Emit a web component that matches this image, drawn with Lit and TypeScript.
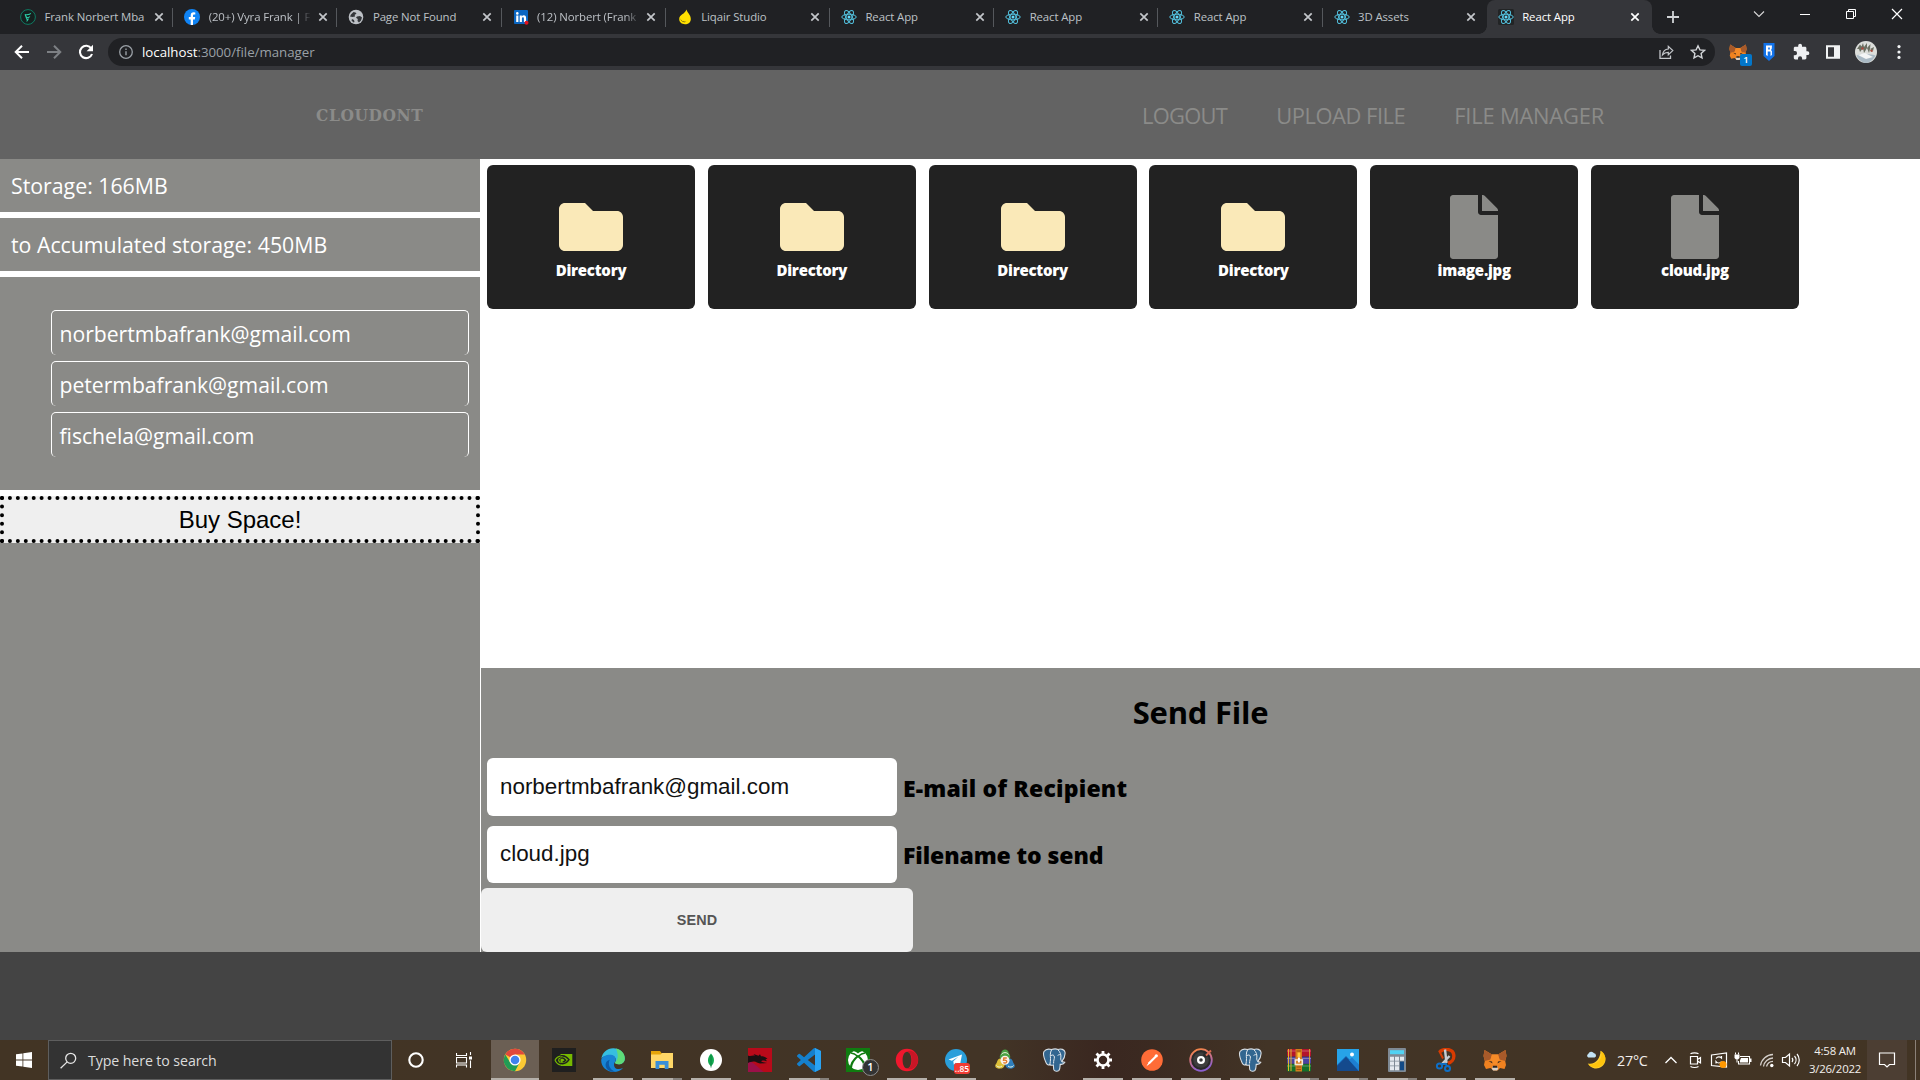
import { LitElement, html, svg, css, nothing } from "lit";
import { customElement } from "lit/decorators.js";
import { classMap } from "lit/directives/class-map.js";

const reactLogo = svg`
  <g fill="none" stroke="#53c1de" stroke-width="1">
    <ellipse cx="8" cy="8" rx="7.2" ry="2.8"/>
    <ellipse cx="8" cy="8" rx="7.2" ry="2.8" transform="rotate(60 8 8)"/>
    <ellipse cx="8" cy="8" rx="7.2" ry="2.8" transform="rotate(120 8 8)"/>
  </g><circle cx="8" cy="8" r="1.5" fill="#61dafb"/>`;

const favicons: Record<string, unknown> = {
  frank: svg`<circle cx="8" cy="8" r="7.4" fill="#15201f" stroke="#0f7a62"/>
    <path d="M5 5.600c2-.2 4.500-.6 6.300-1.800-.5 1.900-2 2.400-4.300 2.500zM6 8.200c1.500-.2 3-.5 4.300-1.300-.4 1.700-1.500 2-3 2.200zM6.300 10c.9 0 1.700-.2 2.500-.7-.2 1.700-.8 2.700-2.300 3.600.4-1.200.4-2-.2-2.900z" fill="#2bd0a8"/>
    <path d="M5.200 5.200 6.800 9.800" stroke="#2bd0a8" stroke-width="1.300"/>`,
  facebook: svg`<circle cx="8" cy="8" r="8" fill="#1084f5"/>
    <path d="M6.700 16v-5.600H4.800V8h1.900V6.500c0-2.100 1.100-3.200 3-3.200l1.600.1v2h-1c-1 0-1.300.5-1.300 1.300V8h2.200l-.4 2.400H9V16z" fill="#fff"/>`,
  globe: svg`<circle cx="8" cy="8" r="7.300" fill="#bdc1c6"/>
    <path d="M3 5.500 5.500 3l2 .5 1 1.300-1.800 1L7 7.500 4.500 8 2 7.500zM9 7.500l3-.5 2 1.500-1 3-2 2-1.500-1.500.3-2L8 8.800zM4 10l2 1 .5 2-1 .5-2-2z" fill="#33363a"/>`,
  linkedin: svg`<rect x="1" y="1" width="14" height="14" rx="1" fill="#0a66c2"/>
    <circle cx="4.300" cy="4.400" r="1.300" fill="#fff"/>
    <path d="M3.200 6.500h2.200V13H3.200zM6.700 6.500h2.100v.9c.4-.7 1.100-1.100 2-1.100 1.700 0 2.300 1 2.300 2.900V13h-2.200V9.700c0-.9-.2-1.500-.9-1.500-.8 0-1.100.6-1.100 1.500V13H6.700z" fill="#fff"/>
    <circle cx="13.500" cy="13.800" r="2" fill="#e0121f"/>`,
  drop: svg`<path d="M9.500.6c.6 3 4.300 5.400 4.300 9.300 0 3.300-2.600 5.300-5.800 5.300s-5.800-1.900-5.800-5.200C2.200 5.800 8 5.200 9.500.6z" fill="#ffe000"/>
    <path d="M3.400 9.200c.6 2.700 3 3.800 6 3.500-1.500.9-5.400.9-6-3.500z" fill="#3a3410"/>`,
  react: reactLogo,
  reactActive: svg`<rect width="16" height="16" rx="1.500" fill="#222425"/>${reactLogo}`,
};

const tabs = [
  { icon: "frank", title: "Frank Norbert Mba" },
  { icon: "facebook", title: "(20+) Vyra Frank | F", fade: true },
  { icon: "globe", title: "Page Not Found" },
  { icon: "linkedin", title: "(12) Norbert (Frank", fade: true },
  { icon: "drop", title: "Liqair Studio" },
  { icon: "react", title: "React App" },
  { icon: "react", title: "React App" },
  { icon: "react", title: "React App" },
  { icon: "react", title: "3D Assets" },
  { icon: "reactActive", title: "React App", active: true },
];

const fox = svg`
  <path d="M1.500 2 9 6.500h6L22.500 2l1 6-1.300 5 .8 4-1.500 4-4.500-1-2.500 2.500h-4L7.500 20 3 21l-2-4 .8-4L.5 8z" fill="#f08220"/>
  <path d="M1.500 2 9 6.500l-1.500 5L1.800 13 .5 8zM22.500 2 15 6.500l1.500 5 5.700 1.500 1.300-5z" fill="#a85a2a"/>
  <path d="M9 6.500h6l1.500 5-1 5h-7l-1-5z" fill="#f68b28"/>
  <path d="m5.500 13 3.500.5.500 2zM18.500 13l-3.500.5-.5 2z" fill="#3a2a20"/>
  <path d="M9.500 18.500h5l.5 2.500-1 1.500h-4L9 21z" fill="#d8d0c8"/><path d="M10 17.800h4l.5 2h-5z" fill="#2a2320"/>`;

const elephant = svg`
  <path d="M2 3.500C4 .8 7 .8 9.500 1.600 12 .6 14.500.8 16 1.400c3-1 6.500 0 7 2.800.4 3-1.400 7-3.200 9.300.8.600 2 .5 3 .8-.8 1.700-2.800 2.300-4.600 2-.2 2 0 4.500-1.200 6-1.200 1.300-4 1.300-5-.3-.7-1.500-.4-3.500-.6-5-1.400.5-2.700.4-3.600-.5-1.200 1-2.700.3-3.600-1.600C2.600 11.500.7 6 2 3.500z" fill="#326690" stroke="#d9dfe4" stroke-width="1.100"/>
  <path d="M9.500 2C8 4.500 8.300 8 8.500 10.500c.2 2-.5 4-.6 6M16 1.800c2 2 3.400 5 2.800 8-.3 1.800.3 2.600 1 3.700M9 7.500c1.500-1 3.300-.5 3.400 1.500.1 2-1 3.500-.8 6.500M18.700 7c-1.300-.7-2.700-.2-3 .6" fill="none" stroke="#e6ebef" stroke-width="1"/>`;

const apps: { name: string; art: unknown; state?: string }[] = [
  { name: "chrome", state: "active", art: svg`
    <circle cx="12" cy="12" r="11.200" fill="#fbc934"/>
    <path d="M12 12 2.300 6.400A11.200 11.200 0 0 1 21.700 6.400H12z" fill="#e0493c"/>
    <path d="M2.300 6.400A11.200 11.200 0 0 0 12 23.200L16.500 14.700 12 12 7 14.300z" fill="#219c55"/>
    <circle cx="12" cy="12" r="5.600" fill="#fff"/><circle cx="12" cy="12" r="4.300" fill="#3f82ee"/>` },
  { name: "nvidia", art: svg`
    <rect width="24" height="24" fill="#1f1f1f"/><path d="M8.500 6h11.800v12H8.500z" fill="#76b900"/>
    <path d="M3 12c2-3.300 5-4.500 7.500-4.300 3 .2 5 2 6.500 4-1.700 2.500-4 4-6.300 4-3-.1-4-2.200-4-3.800 1-1.700 2.300-2 3.600-2 1.700.2 2.500 1.500 3.300 2.300-.9 1-1.900 1.800-3 1.600" fill="none" stroke="#1f1f1f" stroke-width="1.400"/>
    <path d="M3 12c1.300-2.200 3.300-3.700 5.500-4M3 12c1 2.500 3 4.500 5.500 5M6.500 11.800c.4-1 1.100-1.500 2-1.800M6.500 11.800c.3 1.400 1 2.400 2 3" fill="none" stroke="#76b900" stroke-width="1.200"/>` },
  { name: "edge", state: "open", art: svg`
    <path d="M.3 11C1.300 4.500 6 .2 12.200.2c6.500 0 11.500 4.600 11.600 10 0 4-2.800 6-6.300 6-2.500 0-4-.9-3.400-1.900 1.800-2.500.4-6.500-4.400-6.700C5 7.400 1 9 .3 11z" fill="#36bfe0"/>
    <path d="M15 .6c5 1.200 8.800 5 8.800 9.600 0 4-2.800 6-6.300 6-2.500 0-4-.9-3.400-1.900C18 11 17 6 15 .6z" fill="#5edb78"/>
    <path d="M.2 12.200C.6 8.600 5 6.300 9.700 6.700c4.300.4 6 3.800 4.600 6.700-2 2-1.800 7 2.400 7.600 2 .2 3.800-.3 5.400-1.300-2.300 3-6 4.300-9.800 4.200C5.500 23.700 0 18.500.2 12.200z" fill="#1784d5"/>
    <path d="M8.700 11.700c-2.200 4.800 0 9.800 5.600 12-6 .8-10-3.500-9.700-7.200.1-2.300 1.600-4.200 4.100-4.800z" fill="#0d5aa7"/>` },
  { name: "files", state: "multi", art: svg`
    <path d="M1 3h9l1.800 2.500H23V20H1z" fill="#e5a50a"/><path d="M1 6.500h9.500L12 5h11v15H1z" fill="#ffd767"/>
    <path d="M5.500 13h13v8h-3.800v-4.200H9.300V21H5.500z" fill="#3a8fd8"/>` },
  { name: "mongo", state: "open", art: svg`
    <circle cx="12" cy="12" r="11" fill="#fff"/><path d="M12 5.500c4.300 4.500 3.700 10 0 12.700-3.700-2.700-4.300-8.200 0-12.700z" fill="#13aa52"/><path d="M12 7v12.500" stroke="#0b7a3b" stroke-width=".8"/>` },
  { name: "dragon", art: svg`
    <rect width="24" height="24" fill="#b80a1a"/><path d="M0 13c6 1 9 6 16 11H0z" fill="#9c1048"/>
    <path d="M0 7.500c2.500 1.500 4-.5 7 .3L5.500 6l5 1.800 1.500-1.500 1 1.900c2.500 0 4.500.9 6.500 2.500l-2 .5 1.500 2-3-.8c-2-.1-3 .4-2.500 1.400l5.500 1.300-7 .4c-2.500-.3-4-2.300-6.500-2-2 .4-3.500.2-5.500 1.500z" fill="#1b1012"/>` },
  { name: "vscode", state: "multi", art: svg`
    <path fill="#1580cc" d="M23.150 2.587 18.210.210a1.494 1.494 0 0 0-1.705.290l-9.460 8.630-4.120-3.128a1 1 0 0 0-1.276.057L.327 7.261a1 1 0 0 0 0 1.479L3.899 12 .326 15.260a1 1 0 0 0 0 1.479L1.650 17.940a1 1 0 0 0 1.276.057l4.120-3.128 9.460 8.630a1.492 1.492 0 0 0 1.704.290l4.942-2.377A1.500 1.500 0 0 0 24 20.060V3.939a1.500 1.500 0 0 0-.850-1.352zm-5.146 14.861L10.826 12l7.178-5.448z"/>
    <path d="M18 0 24 3v18l-6 3z" fill="#2aa3f2"/>` },
  { name: "xbox", art: svg`
    <rect width="24" height="24" fill="#107c10"/><circle cx="12" cy="12" r="10" fill="#fff"/>
    <path d="M5 3.200c3-.6 5.200.9 7 2.300 1.800-1.400 4-2.900 7-2.300l-2-1.700H7z" fill="#107c10"/>
    <path d="M5 5c3 .3 5 1.800 7 3.600C14 6.800 16 5.300 19 5" stroke="#107c10" stroke-width="1.300" fill="none"/>
    <path d="M12 8C8.500 10.800 5 15.500 4.800 20.500M12 8c3.500 2.800 7 7.500 7.200 12.500" stroke="#107c10" stroke-width="2.200" fill="none"/>` },
  { name: "opera", state: "open", art: svg`
    <path fill-rule="evenodd" d="M12 .8a11.200 11.200 0 1 1 0 22.400A11.200 11.200 0 0 1 12 .8zm0 2.900c-2.700 0-4.400 3.700-4.400 8.300s1.700 8.300 4.400 8.300 4.400-3.700 4.400-8.300S14.700 3.700 12 3.700z" fill="#f0172d"/>
    <path d="M12 3.700C16 .7 23 5 23 12s-7 11.300-11 8.300c2.700 0 5.200-3.700 5.200-8.300S14.700 3.700 12 3.700z" fill="#c81626"/>` },
  { name: "telegram", state: "open", art: svg`
    <circle cx="12" cy="12" r="11" fill="#2a9fdb"/><path d="m4.500 11.500 13.500-5-2.200 11.300-4-3-2 2-.5-3.600 5-4.500-6.400 4z" fill="#fff"/>` },
  { name: "trader", art: svg`
    <path d="M12 1.500c2 0 3.500 1.500 3.700 3.500.8 1.500 1.800 2.500 1.500 4.500-.3 1.500-2.500 2-5.200 2s-4.900-.5-5.200-2c-.3-2 .7-3 1.500-4.500.2-2 1.700-3.500 3.700-3.500z" fill="#4aa044"/>
    <path d="M7 10.500c2.200.5 4.500 3 4.700 5.500.2 2.600-1.700 4.500-4.200 4.500-2 .5-4.700-.3-5.200-2-.4-1.800 1-2.600 1.500-4C4.300 13 5 10.500 7 10.500z" fill="#dcbf38"/>
    <path d="M17 10.500c-2.200.5-4.500 3-4.700 5.500-.2 2.600 1.700 4.500 4.200 4.500 2 .5 4.700-.3 5.200-2 .4-1.800-1-2.600-1.500-4C19.700 13 19 10.500 17 10.500z" fill="#2f7fbd"/>
    <path d="M8.500 6.500C9.500 4 14.500 4 15.500 6.500M3.500 17.500c1 2 4 2 5.500.5M20.500 17.500c-1 2-4 2-5.500.5" stroke="#eaf3dc" stroke-width="1" fill="none"/>
    <circle cx="12" cy="12.300" r="4.500" fill="#f8f1ea"/><path d="M13.800 10h-3l-.3 2.300c3-.6 4 1 2.800 2.200-.8.700-1.800.6-3 .2" fill="none" stroke="#e07a2b" stroke-width="1.300"/>` },
  { name: "postgres", art: elephant },
  { name: "settings", state: "open", art: svg`
    <circle cx="12" cy="12" r="5.500" fill="none" stroke="#fff" stroke-width="2.600"/>
    <path d="M12 6V3M12 21v-3M6 12H3M21 12h-3M7.700 7.700 5.500 5.500M18.500 18.500l-2.200-2.200M7.700 16.300l-2.200 2.200M18.500 5.500l-2.200 2.200" stroke="#fff" stroke-width="2.800"/>` },
  { name: "postman", state: "open", art: svg`
    <circle cx="12" cy="12" r="10.800" fill="#ff6c37"/><path d="m7.500 17 1-2.800L14.800 8l1.500 1.500-6.200 6.200z" fill="#fff"/><circle cx="16.300" cy="7.800" r="1.600" fill="#fff"/><path d="m6.800 17.600 4-3.700" stroke="#fff"/>` },
  { name: "disc", state: "open", art: svg`
    <defs><linearGradient id="ring" x1="0" y1="0" x2="0.300" y2="1"><stop offset="0" stop-color="#ff8a3c"/><stop offset=".55" stop-color="#c9708a"/><stop offset="1" stop-color="#8b5fd0"/></linearGradient></defs>
    <circle cx="12" cy="12" r="10.800" fill="#292929" stroke="url(#ring)" stroke-width="1.800"/>
    <circle cx="12" cy="12" r="7.800" fill="#3d3d3d"/><path d="M12 12 15 4.800 19.500 8z" fill="#292929"/><path d="m17 7.500 5-5" stroke="#d86a52" stroke-width="2"/>
    <circle cx="12" cy="12" r="2.900" fill="none" stroke="#fff" stroke-width="2.200"/>` },
  { name: "postgres", state: "open", art: elephant },
  { name: "winrar", state: "multi", art: svg`
    <rect x="0" y="1" width="24" height="7.500" rx="1" fill="#b3142c"/><rect x="0" y="8.800" width="24" height="7" rx="1" fill="#4a42a0"/><rect x="0" y="16" width="24" height="7.500" rx="1" fill="#14702a"/>
    <path d="M0 3h24M0 10.500h24M0 18h24" stroke="#fff" stroke-opacity=".3"/>
    <path d="M1.500 1v22M4 1v22" stroke="#e0b52e" stroke-width="1"/><path d="M22.500 1v22" stroke="#e0b52e" stroke-width=".8"/>
    <rect x="8.500" y="1" width="6.500" height="22.500" fill="#d47a1d"/><path d="M9.500 3h4.500M9.500 19h4.500M9.500 21.500h4.500" stroke="#9a5511"/>
    <rect x="8.300" y="12" width="7" height="4.500" fill="none" stroke="#f2e6cf" stroke-width="1.600"/><rect x="10.500" y="4.500" width="2.800" height="4.500" fill="#ffc83a"/><rect x="10.900" y="9.500" width="2" height="5" fill="#fff"/>` },
  { name: "photos", state: "multi", art: svg`
    <rect x="1" y="1" width="22" height="22" fill="#27a3e8"/><path d="M1 17 10 8l13 13v2H1z" fill="#1565b5"/><path d="m1 18 9-9 12.500 14H1z" fill="#144a8d"/><path d="m13 12 3-2.500 7 7V23z" fill="#1e7fd1"/><circle cx="16" cy="6.500" r="2" fill="#fff"/>` },
  { name: "calc", state: "multi", art: svg`
    <rect x="3" width="18" height="24" rx="1" fill="#7f8a95"/><rect x="5" y="2.200" width="14" height="4" fill="#51d2f2"/>
    <path d="M5 8.800h4v4H5zM10 8.800h4v4h-4zM15 8.800h4v4h-4zM5 13.600h4v4H5zM10 13.600h4v4h-4zM5 18.300h4v4H5zM10 18.300h4v4h-4z" fill="#e4e9ee"/><path d="M15 13.600h4v8.700h-4z" fill="#134a86"/>` },
  { name: "snip", state: "open", art: svg`
    <path d="M6 3.500C11 0 19 .800 19.800 7c.5 4.500-2.500 7.500-5.800 8.200" fill="none" stroke="#d83b01" stroke-width="3.400"/><path d="M5 2.500 9 10.500" stroke="#d83b01" stroke-width="2"/>
    <path d="M11 1.500 12.500 15M15.500 8 8 16" stroke="#c5ccd2" stroke-width="2.400"/>
    <circle cx="5.500" cy="18" r="2.600" fill="none" stroke="#0f6fc6" stroke-width="2"/><circle cx="13.500" cy="20.500" r="2.500" fill="none" stroke="#0f6fc6" stroke-width="2"/><path d="M8 16h4l.9 2.300" stroke="#0f6fc6" stroke-width="1.800" fill="none"/>` },
  { name: "metamask", state: "open", art: fox },
];

const icon = (size: number, box: number, art: unknown) =>
  html`<svg width=${size} height=${size} viewBox="0 0 ${box} ${box}">${art}</svg>`;

@customElement("browser-chrome")
export class BrowserChrome extends LitElement {
  static styles = css`
    :host { display: block; font-family: "Open Sans", "Noto Sans", sans-serif; }
    svg { display: block; flex: none; }
    .strip { display: flex; height: 34px; background: #202124; padding-left: 9px; box-sizing: border-box; }
    .tab { position: relative; box-sizing: border-box; width: 164.2px; height: 34px; flex: none; display: flex; align-items: center; gap: 8.500px; padding: 0 6.500px 0 11px; color: #bdc1c6; font-size: 11.400px; }
    .tab::after { content: ""; position: absolute; right: 0; top: 8px; width: 1px; height: 19px; background: #55585c; }
    .tab.plain { padding-right: 8px; }
    .tab.plain::after { display: none; }
    .tab.active { width: 165px; background: #35363a; border-radius: 8px 8px 0 0; color: #fff; padding-right: 9px; }
    .tab.active::before, .tab.active::after { content: ""; position: absolute; top: auto; bottom: 0; width: 8px; height: 8px; display: block; }
    .tab.active::before { left: -8px; right: auto; background: radial-gradient(circle at 0 0, #202124 7.5px, #35363a 8px); }
    .tab.active::after { right: -8px; background: radial-gradient(circle at 100% 0, #202124 7.5px, #35363a 8px); }
    .title { flex: 1; min-width: 0; white-space: nowrap; line-height: 18px; letter-spacing: -0.1px; margin-right: -7px; }
    .title.fade { mask-image: linear-gradient(90deg, #000 84%, transparent 98%); letter-spacing: -0.100px; }
    .plus { display: flex; align-items: center; width: 28px; justify-content: center; margin-left: 7px; }
    .window { margin-left: auto; display: flex; height: 28px; align-items: center; }
    .window svg { margin: 0 15px; }
    .bar { display: flex; height: 36px; box-sizing: border-box; background: #35363a; align-items: center; padding: 0 5px 0 6px; }
    .nav { display: flex; width: 102px; }
    .nav svg, .ext > svg { margin: 0 6px; }
    .address { box-sizing: border-box; width: 1607px; height: 28px; border-radius: 14px; background: #202124; display: flex; align-items: center; padding: 0 9px 0 10px; color: #9aa0a6; font-size: 13.300px; letter-spacing: -0.030px; }
    .url { margin-left: 8px; flex: 1; line-height: 20px; }
    .host { color: #fff; }
    .actions { display: flex; gap: 16px; }
    .ext { display: flex; margin-left: auto; align-items: center; }
    .badged { position: relative; margin: 0 6px; }
    .badge { position: absolute; left: 11px; top: 11px; width: 12px; height: 12px; border-radius: 2px; background: #0376c9; color: #fff; font: 600 9.500px/12px "Open Sans", sans-serif; text-align: center; }
  `;

  render() {
    return html`
      <div class="strip">
        ${tabs.map((t, i) => html`
          <div class=${classMap({ tab: true, active: !!t.active, plain: i === 8 })}>
            ${icon(16, 16, favicons[t.icon])}
            <span class=${classMap({ title: true, fade: !!t.fade })}>${t.title}</span>
            <svg width="16" height="16" viewBox="0 0 16 16"><path d="m4.300 4.300 7.400 7.400m0-7.400-7.400 7.400" stroke=${t.active ? "#fff" : "#c3c6ca"} stroke-width="1.700"/></svg>
          </div>`)}
        <div class="plus">${icon(16, 16, svg`<path d="M8 2v12M2 8h12" stroke="#d0d3d6" stroke-width="1.800"/>`)}</div>
        <div class="window">
          ${icon(16, 16, svg`<path d="m3 5.500 5 5 5-5" fill="none" stroke="#d8d8d8" stroke-width="1.100"/>`)}
          ${icon(16, 16, svg`<path d="M3 8.500h10" stroke="#fff"/>`)}
          ${icon(16, 16, svg`<path d="M3.500 5.500h7v7h-7zM5.500 5.500v-2h7v7h-2" fill="none" stroke="#fff"/>`)}
          ${icon(16, 16, svg`<path d="m3 3 10 10m0-10L3 13" stroke="#fff" stroke-width="1.200"/>`)}
        </div>
      </div>
      <div class="bar">
        <div class="nav">
          ${icon(20, 20, svg`<path d="M17 10H4m6-6.300L3.700 10l6.300 6.300" fill="none" stroke="#fff" stroke-width="2"/>`)}
          ${icon(20, 20, svg`<path d="M3 10h13m-6-6.300 6.300 6.300-6.300 6.300" fill="none" stroke="#7d8084" stroke-width="2"/>`)}
          ${icon(20, 20, svg`<path d="M15.300 6.500A6.200 6.200 0 1 0 16 12" fill="none" stroke="#fff" stroke-width="2.100"/><path d="M17 2.800v6.400h-6.400z" fill="#fff"/>`)}
        </div>
        <div class="address">
          ${icon(16, 16, svg`<circle cx="8" cy="8" r="6.300" fill="none" stroke="#9aa0a6" stroke-width="1.300"/><path d="M8 7.200v4M8 4.500V6" stroke="#9aa0a6" stroke-width="1.400"/>`)}
          <span class="url"><span class="host">localhost</span>:3000/file/manager</span>
          <div class="actions">
            ${icon(16, 16, svg`<path d="M2 6v8.300h10.500V11.500" fill="none" stroke="#c4c7cb" stroke-width="1.300"/><path d="M4.500 10.800C5 7.500 7 5.300 10.300 5V2.300l4.500 4.300-4.500 4.200V8.300c-2.600 0-4.300.8-5.800 2.500z" fill="none" stroke="#c4c7cb" stroke-width="1.200"/>`)}
            ${icon(16, 16, svg`<path d="m8 1.800 1.900 4.100 4.500.5-3.300 3 .9 4.500L8 11.700l-4 2.200.9-4.500-3.300-3 4.500-.5z" fill="none" stroke="#d2d5d8" stroke-width="1.400"/>`)}
          </div>
        </div>
        <div class="ext">
          <div class="badged">${icon(18, 24, fox)}<span class="badge">1</span></div>
          ${icon(20, 20, svg`<path d="M4.500 1h11v13L10 19 4.500 14z" fill="#1273ea"/><path d="M7 3.500h6l-.3 3.500-.8 1 1 1v4l-1.400 1V9.600h-2.800V14L7 13z" fill="#fff"/><path d="M9.200 5.500h1.600v2H9.200z" fill="#1273ea"/>`)}
          ${icon(20, 20, svg`<path d="M16.500 9.300h-1.100V6.200c0-.8-.6-1.400-1.400-1.400h-3V3.600a1.900 1.900 0 0 0-3.800 0v1.200h-3c-.8 0-1.400.6-1.400 1.400v2.900H4a2.050 2.050 0 0 1 0 4.100H2.800V16c0 .8.600 1.400 1.400 1.400H7v-1.100a2.050 2.050 0 0 1 4.100 0v1.100H14c.8 0 1.400-.6 1.400-1.400v-3h1.100a1.850 1.850 0 0 0 0-3.700z" fill="#eef0f2"/>`)}
          ${icon(20, 20, svg`<path fill-rule="evenodd" d="M3 3.200h14v13.600H3zM5 5.200v9.600h6V5.200z" fill="#f1f3f4"/>`)}
          ${icon(22, 22, svg`
            <circle cx="11" cy="11" r="11" fill="#dcdedb"/>
            <path d="M2 8 5 3.500l1.500 2L8 2l1 4 3-4v5l3.500-4-.5 5L19 6l-1 4-3-2-1 4-2-5-3 5-1-5-3 4-1-3z" fill="#6a6f62"/>
            <path d="M6 7l2-1 1 2-2 1zM15 9l2-.5 1 2-2 .5z" fill="#a5483c"/>
            <path d="M1.500 14.500c4-2 13-2 19 0-2 4-5.500 7-9.500 7.500-4-.500-8-3.500-9.500-7.500z" fill="#a9b9c4"/><path d="m3 14 7-2 8 4-7 2z" fill="#f3f5f5"/>`)}
          ${icon(20, 20, svg`<circle cx="10" cy="4.600" r="1.600" fill="#f1f3f4"/><circle cx="10" cy="10" r="1.600" fill="#f1f3f4"/><circle cx="10" cy="15.400" r="1.600" fill="#f1f3f4"/>`)}
        </div>
      </div>`;
  }
}

const entries = [
  { folder: true, name: "Directory" },
  { folder: true, name: "Directory" },
  { folder: true, name: "Directory" },
  { folder: true, name: "Directory" },
  { folder: false, name: "image.jpg" },
  { folder: false, name: "cloud.jpg" },
];

@customElement("file-manager")
export class FileManager extends LitElement {
  static styles = css`
    :host { display: block; font-family: "Open Sans", "Noto Sans", sans-serif; }
    * { box-sizing: border-box; }
    .header { height: 89px; background: #636363; display: flex; align-items: center; justify-content: space-between; padding: 0 316px; color: #8b8b89; }
    .brand { font: 700 17.200px/24px "DejaVu Serif Condensed", "DejaVu Serif", serif; font-stretch: semi-condensed; letter-spacing: 0.600px; }
    .links { display: flex; gap: 49px; font-size: 21.900px; letter-spacing: -0.200px; line-height: 30px; padding-top: 3px; font-weight: 400; white-space: nowrap; }
    .links span:first-child { letter-spacing: -0.700px; }
    .links span:nth-child(2) { letter-spacing: -0.450px; }
    .body { display: grid; grid-template-columns: 480px 1fr; column-gap: 1px; height: 793px; background: #fff; }
    .side { display: flex; flex-direction: column; gap: 6px; color: #fff; font-size: 21.300px; }
    .stat { height: 53px; padding: 0 11px; line-height: 53px; background: #8a8a87; white-space: nowrap; }
    .people { height: 213px; margin: 0; padding: 33px 11px 0 51px; background: #8a8a87; list-style: none; display: flex; flex-direction: column; gap: 6px; }
    .person { height: 45px; border: 1px solid #fff; border-bottom: 0; border-radius: 5px; padding: 0 7.500px; line-height: 45px; font-size: 21.200px; letter-spacing: -0.030px; }
    .buy { height: 47px; border: 4px dotted #000; background: #efefef; color: #000; font: 24px/39px "Liberation Sans", Arial, sans-serif; padding: 0; margin: 0; }
    .rest { flex: 1; margin-top: -6px; background: #8a8a87; }
    .main { display: flex; flex-direction: column; }
    .files { flex: 1; display: flex; align-items: flex-start; gap: 12.800px; padding: 6px; }
    .card { width: 208px; height: 144px; border-radius: 6px; background: #222; color: #fff; display: flex; flex-direction: column; align-items: center; padding-top: 30px; font-size: 15px; font-weight: 800; line-height: 23px; letter-spacing: -0.250px; }
    .card svg { display: block; }
    .send { height: 284px; background: #8a8a87; color: #000; display: flex; flex-direction: column; align-items: flex-start; }
    .heading { align-self: center; margin: 0; font-size: 31px; line-height: 44px; font-weight: 700; padding: 22px 0; height: 90px; letter-spacing: -0.250px; }
    .field { display: flex; align-items: center; gap: 6px; padding-left: 6px; font-size: 23px; font-weight: 800; letter-spacing: 0.200px; white-space: nowrap; }
    .field + .field { margin-top: 10px; }
    .input { width: 410px; height: 58px; border: 0; border-radius: 6px; background: #fff; padding: 0 13px; font: 400 22.400px "Liberation Sans", Arial, sans-serif; color: #111; letter-spacing: 0; }
    .field.low { letter-spacing: -0.100px; }
    .field.low .input { height: 57px; padding-bottom: 2px; }
    .label { padding-top: 2px; }
    .field.low .label { padding-top: 0; }
    .submit { margin-top: 5px; width: 432px; height: 64px; border: 0; border-radius: 6px; background: #efefef; color: #555; font: 700 14.400px "Liberation Sans", Arial, sans-serif; letter-spacing: 0.100px; }
    .footer { height: 88px; background: #444; }
  `;

  render() {
    return html`
      <div class="header">
        <div class="brand">CLOUDONT</div>
        <div class="links"><span>LOGOUT</span><span>UPLOAD FILE</span><span>FILE MANAGER</span></div>
      </div>
      <div class="body">
        <div class="side">
          <div class="stat">Storage: 166MB</div>
          <div class="stat">to Accumulated storage: 450MB</div>
          <ul class="people">
            ${["norbertmbafrank@gmail.com", "petermbafrank@gmail.com", "fischela@gmail.com"].map((p) => html`<li class="person">${p}</li>`)}
          </ul>
          <button class="buy">Buy Space!</button>
          <div class="rest"></div>
        </div>
        <div class="main">
          <div class="files">
            ${entries.map((e) => html`
              <div class="card">
                ${e.folder
                  ? html`<svg width="64" height="64" viewBox="0 0 512 512"><path fill="#fae9b8" d="M464 128H272l-64-64H48C21.490 64 0 85.490 0 112v288c0 26.510 21.490 48 48 48h416c26.510 0 48-21.490 48-48V176c0-26.510-21.490-48-48-48z"/></svg>`
                  : html`<svg width="48" height="64" viewBox="0 0 384 512"><path fill="#8a8a87" d="M224 136V0H24C10.700 0 0 10.700 0 24v464c0 13.300 10.700 24 24 24h336c13.300 0 24-10.700 24-24V160H248c-13.200 0-24-10.800-24-24zm160-14.100v6.100H256V0h6.100c6.400 0 12.500 2.500 17 7l97.900 98c4.500 4.500 7 10.600 7 16.900z"/></svg>`}
                <span>${e.name}</span>
              </div>`)}
          </div>
          <div class="send">
            <h2 class="heading">Send File</h2>
            <div class="field"><input class="input" .value=${"norbertmbafrank@gmail.com"}><span class="label">E-mail of Recipient</span></div>
            <div class="field low"><input class="input" .value=${"cloud.jpg"}><span class="label">Filename to send</span></div>
            <button class="submit">SEND</button>
          </div>
        </div>
      </div>
      <div class="footer"></div>`;
  }
}

@customElement("task-bar")
export class TaskBar extends LitElement {
  static styles = css`
    :host { display: block; font-family: "Open Sans", "Noto Sans", sans-serif; }
    svg { display: block; flex: none; }
    .bar { height: 40px; display: flex; color: #f2efec; background: linear-gradient(90deg, #423424 0, #423426 52%, #3a2720 57.500%, #3b2a21 60%, #423426 66%, #423424 100%); }
    .cell { width: 48px; height: 40px; display: flex; align-items: center; justify-content: center; flex: none; }
    .search { box-sizing: border-box; width: 344px; height: 40px; flex: none; border: 1px solid #5e5e5e; background: #333; display: flex; align-items: center; gap: 11px; padding-left: 11px; font-size: 14.200px; color: #dcdcdc; letter-spacing: -0.100px; }
    .apps { display: flex; gap: 1px; margin-left: 3px; }
    .app { position: relative; width: 48px; height: 40px; display: flex; align-items: center; justify-content: center; }
    .app.active { background: #6b5f54; }
    .mark { position: absolute; left: 4px; right: 4px; bottom: 0; height: 2px; background: #b5b0aa; }
    .app.active .mark { left: 0; right: 0; }
    .app.multi .mark { background: linear-gradient(90deg, #b5b0aa 31px, #86817c 31px); }
    .count { position: absolute; left: 28px; top: 19px; box-sizing: border-box; width: 17px; height: 17px; border-radius: 50%; border: 1px solid #8e8e8e; background: #333; color: #fff; font: 600 11px/14px "Open Sans", sans-serif; text-align: center; }
    .unread { position: absolute; left: 22px; top: 23px; width: 16px; height: 11px; border-radius: 3px; background: #f23c34; color: #fff; font: 600 8.500px/11px "Open Sans", sans-serif; text-align: center; }
    .tray { margin-left: auto; display: flex; align-items: center; }
    .temp { font-size: 14.300px; width: 51px; padding-left: 9px; box-sizing: border-box; letter-spacing: -0.200px; white-space: nowrap; }
    .tray > svg { margin: 0 2px; }
    .clock { width: 64px; text-align: center; font-size: 11.400px; line-height: 18px; height: 40px; letter-spacing: -0.200px; padding-top: 2px; box-sizing: border-box; white-space: nowrap; }
    .notes { width: 40px; height: 40px; background: #4c3e33; display: flex; align-items: center; justify-content: center; }
    .peek { width: 5px; height: 40px; margin-left: 8px; border-left: 1px solid #8b8178; box-sizing: border-box; }
  `;

  render() {
    return html`
      <div class="bar">
        <div class="cell">${icon(16, 16, svg`<path d="M0 2.300 6.500 1.400v6.200H0zM7.300 1.300 16 0v7.600H7.300zM0 8.400h6.500v6.200L0 13.700zM7.300 8.400H16V16l-8.700-1.300z" fill="#fff"/>`)}</div>
        <div class="search">
          ${icon(17, 17, svg`<circle cx="10.700" cy="6.300" r="5" fill="none" stroke="#e6e6e6" stroke-width="1.300"/><path d="M7.200 9.900.6 16.300" stroke="#e6e6e6" stroke-width="1.300"/>`)}
          <span>Type here to search</span>
        </div>
        <div class="cell">${icon(18, 18, svg`<circle cx="9" cy="9" r="6.700" fill="none" stroke="#fff" stroke-width="2.100"/>`)}</div>
        <div class="cell">${icon(16, 16, svg`<path d="M.5 1v2.500h10V1M.5 15.500V13h10v2.500M.5 5.500h10V11H.5zM14.500 0v3M14.500 8.500V16" fill="none" stroke="#fff" stroke-width="1.100"/><path d="M13 4.500h3v3h-3z" fill="#fff"/>`)}</div>
        <div class="apps">
          ${apps.map((a) => html`
            <div class=${classMap({ app: true, active: a.state === "active", multi: a.state === "multi" })}>
              ${icon(24, 24, a.art)}
              ${a.name === "xbox" ? html`<span class="count">1</span>` : nothing}
              ${a.name === "telegram" ? html`<span class="unread">..85</span>` : nothing}
              ${a.state ? html`<span class="mark"></span>` : nothing}
            </div>`)}
        </div>
        <div class="tray">
          ${icon(20, 20, svg`<path d="M14.500.8a9.400 9.400 0 1 1-12.700 12.700C9 15 14.500 9 14.500.8z" fill="#ffd02e"/><path d="M14.500.8c3 5 0 13-12 14 6 5.500 16 2.500 16.800-5.800.3-3.500-1.500-6.700-4.800-8.200z" fill="#ffbf00" opacity=".7"/><path d="M2.300 7.600A2 2 0 0 1 2.200 4 3.200 3.200 0 0 1 8 3.200a2.300 2.300 0 0 1 .6 4.400z" fill="#c3e3f5"/>`)}
          <span class="temp">27°C</span>
          ${icon(20, 20, svg`<path d="m4.500 13 5.500-5.500L15.500 13" fill="none" stroke="#fff" stroke-width="1.300"/>`)}
          ${icon(20, 20, svg`<path d="M5.500 6.500h7v7.500h-7zM12.500 9.500l3-2v5.500l-3-2M5.500 3.800c2-1.300 6-1.300 8 0M5.500 16.500c2 1.300 6 1.300 8 0" fill="none" stroke="#fff" stroke-width="1.200"/>`)}
          ${icon(20, 20, svg`<path d="M2.500 5 17.500 3v14l-15-1.500zM7 8.500c1.500-2 4-2 5.500-.5V6M12.500 11.500c-1.500 2-4 2-5.500 0v2" fill="none" stroke="#fff" stroke-width="1.200"/><circle cx="14" cy="14.500" r="3.500" fill="#ff9800"/>`)}
          ${icon(20, 20, svg`<path d="M7 6.500h9.500v7.500H5.500v-3" fill="none" stroke="#fff" stroke-width="1.100"/><path d="M8 8h7v4.500H7V10.500zM17 8.500h1.500v3.500H17zM1.500 4.500h5V8L5 9.500H3L1.500 8z" fill="#fff"/><path d="M2.500 4.500v-2M5.500 4.500v-2M4 9.500v3" stroke="#fff"/>`)}
          ${icon(20, 20, svg`<path d="M3.500 15.500A13 13 0 0 1 16 4.500M6.500 16.500A10 10 0 0 1 16 8M9.500 16.500A7 7 0 0 1 16 11.300" fill="none" stroke="#d5d0cb" stroke-width="1.300"/><circle cx="14.800" cy="15.500" r="1.700" fill="#fff"/>`)}
          ${icon(20, 20, svg`<path d="M1.500 7.500h3L8.500 4v12l-4-3.500h-3zM11 8c1 1.200 1 2.800 0 4M13.500 6c2 2.300 2 5.700 0 8M16 4c3 3.500 3 8.500 0 12" fill="none" stroke="#fff" stroke-width="1.200"/>`)}
          <div class="clock"><div>4:58 AM</div><div>3/26/2022</div></div>
          <div class="notes">${icon(18, 18, svg`<path d="M1.500 2h15v11.500h-5L9 16l-2.500-2.500h-5z" fill="none" stroke="#fff" stroke-width="1.200"/>`)}</div>
          <div class="peek"></div>
        </div>
      </div>`;
  }
}

@customElement("app-root")
export class AppRoot extends LitElement {
  static styles = css`
    :host { display: block; width: 1920px; height: 1080px; overflow: hidden; }
  `;

  render() {
    return html`<browser-chrome></browser-chrome><file-manager></file-manager><task-bar></task-bar>`;
  }
}
